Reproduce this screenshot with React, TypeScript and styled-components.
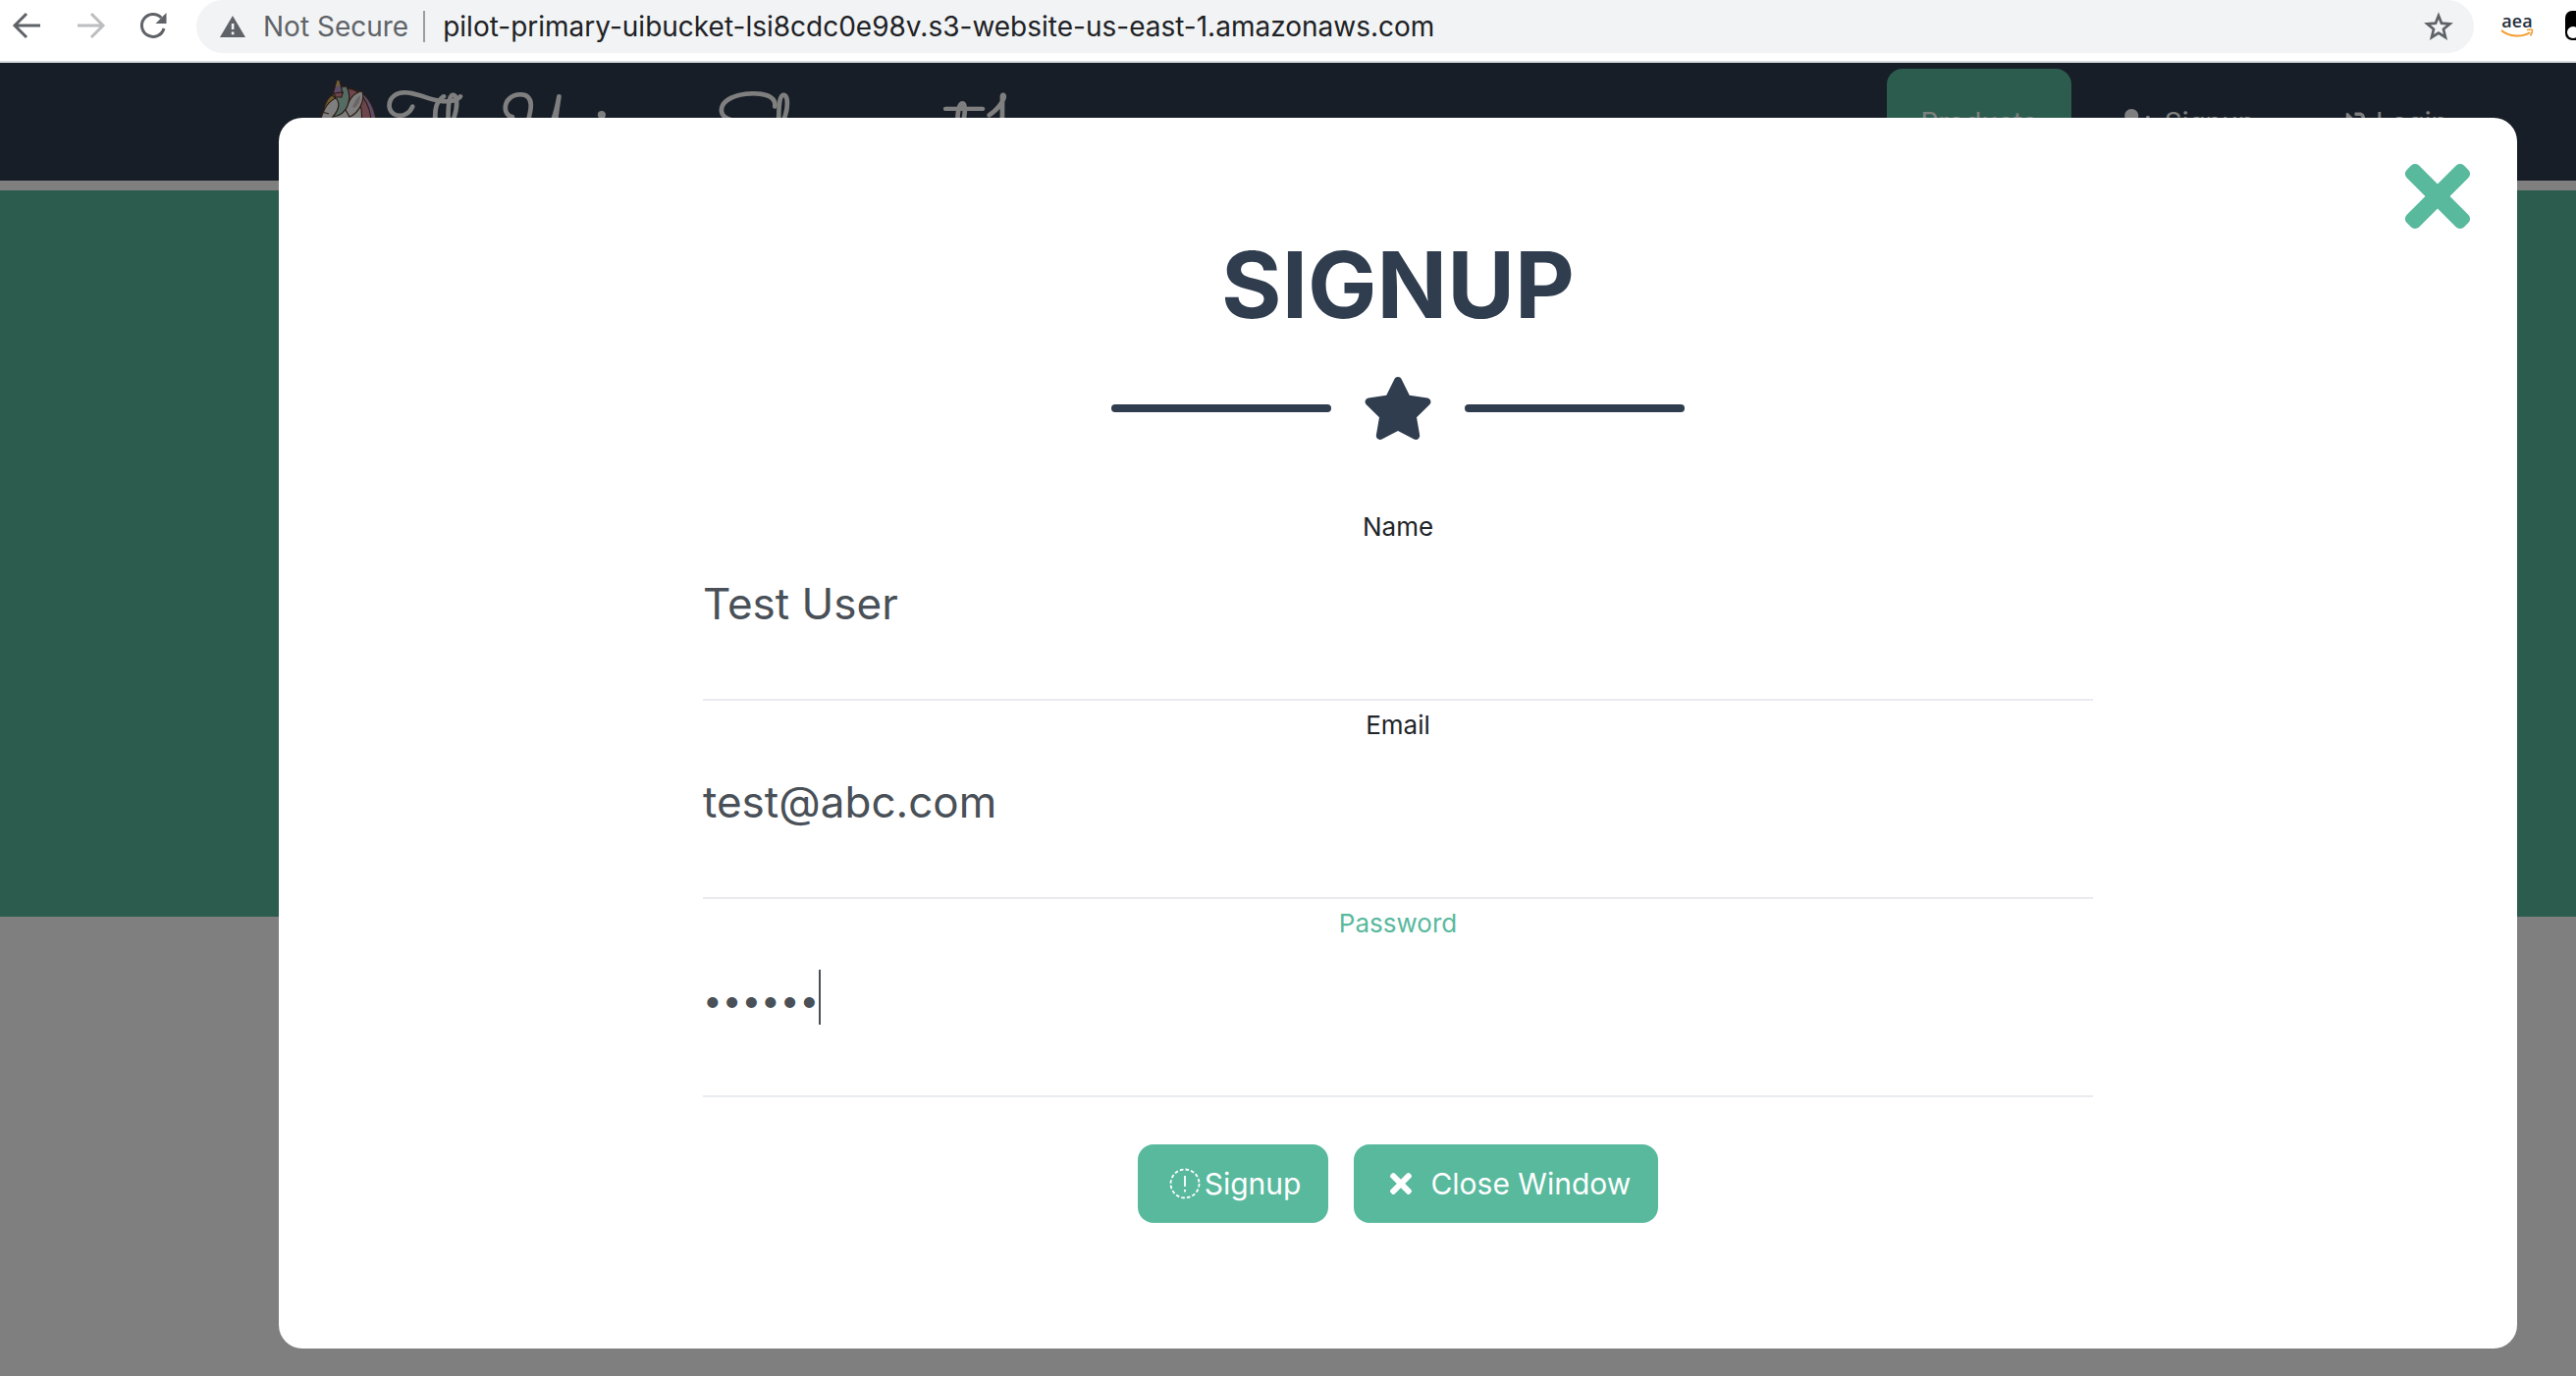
import React, { useState } from "react";
import styled, { createGlobalStyle } from "styled-components";
import { FaStar, FaTimes, FaUserPlus, FaSignInAlt } from "react-icons/fa";

const GREEN = "#58b99d";
const NAVY = "#2f3d4f";

const GlobalStyle = createGlobalStyle`
  *, *::before, *::after { box-sizing: border-box; }
  body {
    margin: 0;
    font-family: Inter, "Liberation Sans", sans-serif;
    background: #fff;
    color: #212529;
  }
  button, input { font-family: inherit; }
`;

const Screen = styled.div`
  display: flex;
  flex-direction: column;
  min-height: 100vh;
`;

/* Browser toolbar */
const Toolbar = styled.header`
  display: flex;
  align-items: flex-start;
  height: 64px;
  background: #fff;
  border-bottom: 2px solid #d9dce1;
  overflow: hidden;
`;

const ToolButtons = styled.div`
  display: flex;
  align-items: center;
  gap: 32px;
  height: 52px;
  padding: 0 28px 0 12px;
`;

const ToolButton = styled.button<{ $faded?: boolean }>`
  display: flex;
  width: 32px;
  height: 32px;
  padding: 0;
  border: 0;
  background: none;
  color: ${(p) => (p.$faded ? "#bcbec0" : "#5f6368")};
`;

const AddressBar = styled.div`
  display: flex;
  align-items: center;
  flex: 1;
  min-width: 0;
  height: 54px;
  padding: 0 20px 0 24px;
  border-radius: 27px;
  background: #f1f3f4;
`;

const Security = styled.span`
  display: flex;
  align-items: center;
  gap: 18px;
  padding-right: 15px;
  border-right: 2px solid #9a9da1;
  color: #5f6368;
  font-size: 28px;
  line-height: 32px;
  white-space: nowrap;
`;

const Address = styled.input`
  flex: 1;
  min-width: 0;
  padding: 0 0 0 18px;
  border: 0;
  outline: 0;
  background: none;
  color: #202124;
  font-size: 28px;
  line-height: 32px;
`;

const Extensions = styled.div`
  display: flex;
  align-items: center;
  flex: none;
  gap: 32px;
  width: 104px;
  height: 52px;
  padding-left: 27px;
  overflow: hidden;
`;

const ExtensionButton = styled.button`
  display: flex;
  flex: none;
  padding: 0;
  border: 0;
  background: none;
`;

const AeaButton = styled(ExtensionButton)`
  flex-direction: column;
  align-items: center;
  width: 34px;
  color: #252f3e;
  font-family: "Open Sans", sans-serif;
  font-size: 18px;
  font-weight: 600;
  line-height: 16px;
`;

/* Web page */
const Viewport = styled.div`
  position: relative;
  flex: 1;
  background: #fff;
`;

const NavBar = styled.nav`
  display: flex;
  align-items: center;
  justify-content: space-between;
  height: 120px;
  padding: 0 96px 0 324px;
  background: ${NAVY};
  overflow: hidden;
`;

const Brand = styled.a`
  display: flex;
  align-items: center;
  gap: 8px;
  color: #fff;
  font-family: "Sacramento", "Liberation Serif", serif;
  font-size: 68px;
  font-weight: 700;
  line-height: 80px;
  text-decoration: none;
  white-space: nowrap;
`;

const BrandName = styled.span`
  padding-top: 12px;
`;

const NavLinks = styled.div`
  display: flex;
  gap: 14px;
`;

const NavLink = styled.a<{ $active?: boolean }>`
  display: flex;
  align-items: center;
  gap: 11px;
  height: 108px;
  padding: 2px 35px 0;
  border-radius: 16px;
  background: ${(p) => (p.$active ? GREEN : "transparent")};
  color: #fff;
  font-size: 28px;
  text-decoration: none;
`;

const SignupIcon = styled(FaUserPlus)`
  width: 35px;
  height: 28px;
`;

const Masthead = styled.div`
  height: 740px;
  margin-top: 10px;
  background: ${GREEN};
`;

/* Dialog */
const Overlay = styled.div`
  position: absolute;
  inset: 0;
  padding: 56px 60px 28px 284px;
  background: rgba(0, 0, 0, 0.5);
`;

const Dialog = styled.section`
  position: relative;
  display: flex;
  flex-direction: column;
  align-items: center;
  padding: 112px 48px 128px;
  border-radius: 24px;
  background: #fff;
`;

const CloseButton = styled.button`
  position: absolute;
  top: 32px;
  right: 48px;
  display: flex;
  padding: 0;
  border: 0;
  background: none;
  color: ${GREEN};
`;

const CloseIcon = styled(FaTimes)`
  width: 66px;
  height: 96px;
`;

const Title = styled.h2`
  margin: 0;
  color: ${NAVY};
  font-size: 94px;
  font-weight: 700;
  line-height: 116px;
`;

const Divider = styled.div`
  display: flex;
  align-items: center;
  gap: 32px;
  margin: 36px 0 68px;
  color: ${NAVY};
`;

const DividerLine = styled.span`
  width: 224px;
  height: 8px;
  border-radius: 4px;
  background: ${NAVY};
`;

const DividerStar = styled(FaStar)`
  width: 72px;
  height: 64px;
`;

const Form = styled.form`
  display: flex;
  flex-direction: column;
  gap: 4px;
  width: 100%;
  max-width: 1416px;
`;

const Field = styled.div`
  position: relative;
  display: flex;
  flex-direction: column;
`;

const Label = styled.label<{ $focused?: boolean }>`
  color: ${(p) => (p.$focused ? GREEN : "#212529")};
  font-size: 26px;
  line-height: 42px;
  text-align: center;
`;

const TextInput = styled.input`
  height: 156px;
  padding: 0 0 40px;
  border: 0;
  border-bottom: 2px solid #e9ebef;
  border-radius: 0;
  outline: 0;
  background: none;
  color: #495057;
  font-size: ${(p) => (p.type === "password" ? 35 : 44)}px;
`;

const Caret = styled.span`
  position: absolute;
  top: 68px;
  left: 118px;
  width: 2px;
  height: 56px;
  background: #495057;
`;

const Actions = styled.div`
  display: flex;
  justify-content: center;
  gap: 26px;
  margin-top: 44px;
`;

const ActionButton = styled.button<{ $gap: number }>`
  display: flex;
  align-items: center;
  gap: ${(p) => p.$gap}px;
  height: 80px;
  padding: 0 28px 0 32px;
  border: 0;
  border-radius: 16px;
  background: ${GREEN};
  color: #fff;
  font-size: 30px;

  svg {
    width: 32px;
    height: 32px;
  }
`;

const Arrow = ({ forward }: { forward?: boolean }) => (
  <svg width="32" height="32" viewBox="0 0 32 32" fill="none" stroke="currentColor" strokeWidth="3">
    <path d={forward ? "M3 16H28M17 4L29 16L17 28" : "M29 16H4M15 4L3 16L15 28"} />
  </svg>
);

const Reload = () => (
  <svg width="32" height="32" viewBox="0 0 32 32" fill="none">
    <path d="M27 19A11.5 11.5 0 1 1 24.3 8" stroke="currentColor" strokeWidth="3" />
    <path d="M29.5 3V14H18.5Z" fill="currentColor" />
  </svg>
);

const Warning = () => (
  <svg width="26" height="22" viewBox="0 0 26 22">
    <path d="M13 0L26 22H0Z" fill="currentColor" />
    <path d="M11.8 8h2.6v6h-2.6zM11.8 16.5h2.6v2.7h-2.6z" fill="#f1f3f4" />
  </svg>
);

const Bookmark = () => (
  <svg width="32" height="32" viewBox="0 0 32 32" fill="none" stroke="#5f6368" strokeWidth="2.7">
    <path d="M16 5L19 12.600L27.500 13.300L21 18.700L23 27L16 22.500L9 27L11 18.700L4.500 13.300L13 12.600Z" />
  </svg>
);

const Smile = () => (
  <svg width="34" height="10" viewBox="0 0 34 10" fill="none" stroke="#f49b2b" strokeWidth="2">
    <path d="M1 2C9 9 23 9 30 4" />
    <path d="M27 1.5C30 .8 33 .8 32.5 2C32.5 4 31.5 6 30.5 7.5" strokeWidth="1.6" />
  </svg>
);

const Tile = () => (
  <svg width="30" height="30" viewBox="0 0 30 30">
    <rect width="30" height="30" rx="7" fill="#000" />
    <circle cx="8" cy="22" r="6" fill="#fff" />
  </svg>
);

const Unicorn = () => (
  <svg width="62" height="84" viewBox="0 0 62 84" stroke="#5a3a28" strokeWidth="1.2">
    <path d="M30 9C46 8 58 22 60 46V84H24Z" fill="#b79bd6" />
    <path d="M26 9C42 5 54 24 54 44V84H24Z" fill="#d98a9b" />
    <path d="M6 30C7 22 10 17 16 14L20 30Z" fill="#e0bd66" />
    <path d="M2 42C6 28 10 21 20 17L44 28C46 50 44 66 40 84H6Z" fill="#fff" />
    <path d="M28 30C31 20 37 12 45 11C48 20 42 33 32 37Z" fill="#fff" />
    <path d="M35 27C37 21 40 17 43 15C43 21 41 25 37 28Z" fill="#d8c9c9" stroke="none" />
    <path d="M14 15C17 9 22 6 29 6C35 18 31 35 15 37C23 28 23 20 14 15Z" fill="#a9d9c8" />
    <path d="M15 14L19 0L22 0L25 13Z" fill="#b79bd6" />
    <path d="M18 6L19.500 0H21L22.500 6Z" fill="#e0bd66" stroke="none" />
    <path d="M16 13L25 12L24 17H18Z" fill="#d98a9b" />
    <path d="M4 32L11 34" fill="none" />
  </svg>
);

const DashedAlert = () => (
  <svg viewBox="0 0 32 32" fill="none" stroke="#fff" strokeWidth="1.8">
    <circle cx="16" cy="16" r="14.5" strokeDasharray="3.6 2.1" />
    <path d="M16 8V19M16 22V24.5" />
  </svg>
);

export default function App() {
  const [name, setName] = useState("Test User");
  const [email, setEmail] = useState("test@abc.com");
  const [password, setPassword] = useState("secret");

  return (
    <Screen>
      <GlobalStyle />
      <Toolbar>
        <ToolButtons>
          <ToolButton aria-label="Back"><Arrow /></ToolButton>
          <ToolButton aria-label="Forward" $faded><Arrow forward /></ToolButton>
          <ToolButton aria-label="Reload"><Reload /></ToolButton>
        </ToolButtons>
        <AddressBar>
          <Security><Warning />Not Secure</Security>
          <Address
            aria-label="Address"
            readOnly
            value="pilot-primary-uibucket-lsi8cdc0e98v.s3-website-us-east-1.amazonaws.com"
          />
          <ToolButton aria-label="Bookmark"><Bookmark /></ToolButton>
        </AddressBar>
        <Extensions>
          <AeaButton>aea<Smile /></AeaButton>
          <ExtensionButton aria-label="Extension"><Tile /></ExtensionButton>
        </Extensions>
      </Toolbar>

      <Viewport>
        <NavBar>
          <Brand href="#"><Unicorn /><BrandName>The Unicorn Shop-event 1</BrandName></Brand>
          <NavLinks>
            <NavLink href="#products" $active>Products</NavLink>
            <NavLink href="#signup"><SignupIcon />Signup</NavLink>
            <NavLink href="#login"><FaSignInAlt />Login</NavLink>
          </NavLinks>
        </NavBar>
        <Masthead />

        <Overlay>
          <Dialog role="dialog" aria-labelledby="signup-title">
            <CloseButton aria-label="Close"><CloseIcon /></CloseButton>
            <Title id="signup-title">SIGNUP</Title>
            <Divider>
              <DividerLine />
              <DividerStar />
              <DividerLine />
            </Divider>
            <Form onSubmit={(e) => e.preventDefault()}>
              <Field>
                <Label htmlFor="name">Name</Label>
                <TextInput id="name" value={name} onChange={(e) => setName(e.target.value)} />
              </Field>
              <Field>
                <Label htmlFor="email">Email</Label>
                <TextInput id="email" type="email" value={email} onChange={(e) => setEmail(e.target.value)} />
              </Field>
              <Field>
                <Label htmlFor="password" $focused>Password</Label>
                <TextInput id="password" type="password" value={password} onChange={(e) => setPassword(e.target.value)} />
                <Caret />
              </Field>
              <Actions>
                <ActionButton type="submit" $gap={4}><DashedAlert />Signup</ActionButton>
                <ActionButton type="button" $gap={14}><FaTimes />Close Window</ActionButton>
              </Actions>
            </Form>
          </Dialog>
        </Overlay>
      </Viewport>
    </Screen>
  );
}
